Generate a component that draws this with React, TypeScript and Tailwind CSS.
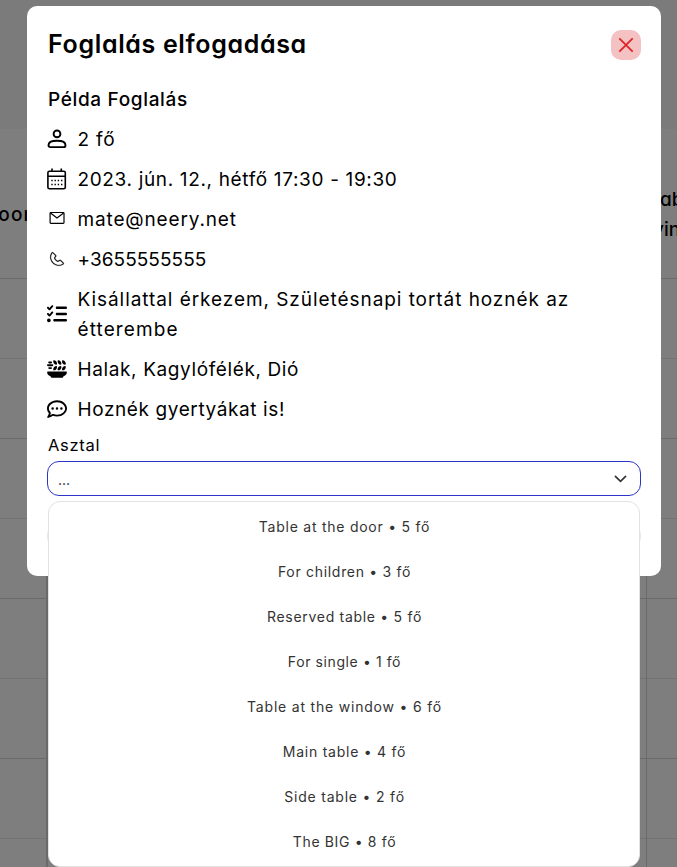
import type { ReactNode } from "react";
import { CiPhone } from "react-icons/ci";
import { FaListCheck, FaPlateWheat, FaRegCommentDots } from "react-icons/fa6";

const tables = [
  { label: "Table at the door • 5 fő", tracking: "tracking-[0.75px]" },
  { label: "For children • 3 fő", tracking: "tracking-[0.7px]" },
  { label: "Reserved table • 5 fő", tracking: "tracking-[0.7px]" },
  { label: "For single • 1 fő", tracking: "tracking-[0.6px]" },
  { label: "Table at the window • 6 fő", tracking: "tracking-[0.8px]" },
  { label: "Main table • 4 fő", tracking: "tracking-[0.75px]" },
  { label: "Side table • 2 fő", tracking: "tracking-[0.8px]" },
  { label: "The BIG • 8 fő", tracking: "tracking-[0.65px]" },
];

function PersonIcon() {
  return (
    <svg width="20" height="20" viewBox="0 0 20 20" fill="none" stroke="currentColor" strokeWidth="1.9">
      <circle cx="10" cy="4.900" r="3.400" />
      <path d="M1.500 16.200c0-3 4-4.400 8.500-4.400s8.500 1.400 8.500 4.400c0 1.200-.7 1.900-1.900 1.900H3.400c-1.200 0-1.900-.7-1.900-1.900z" />
    </svg>
  );
}

function CalendarIcon() {
  return (
    <svg width="20" height="22" viewBox="0 0 20 22" fill="none" stroke="currentColor" strokeWidth="1.600" className="-mt-px">
      <rect x="0.900" y="3.200" width="17.400" height="17.600" rx="1.500" />
      <path d="M1 8.300h17.300M5 0.600V3.500M14.300 0.600V3.500" />
      <path d="M4.300 12.500h1.400M7.500 12.500h1.400M10.700 12.500h1.400M14 12.500h1.400M4.300 16.500h1.400M7.500 16.500h1.400M10.700 16.500h1.400M14 16.500h1.400" strokeWidth="1.400" />
    </svg>
  );
}

function MailIcon() {
  return (
    <svg width="20" height="20" viewBox="0 0 20 20" fill="none" stroke="currentColor" strokeWidth="1.200">
      <rect x="3.100" y="3.500" width="13.900" height="10.800" rx="0.800" />
      <path d="M3.500 4.100l6.500 4.800 6.600-4.800" />
    </svg>
  );
}

function Detail({ icon, children }: { icon: ReactNode; children: ReactNode }) {
  return (
    <div className="mt-2.5 flex items-center">
      <span className="flex w-[30.5px] shrink-0 items-center">{icon}</span>
      <span className="translate-y-px whitespace-nowrap text-[19px] leading-[30px]">{children}</span>
    </div>
  );
}

function Backdrop() {
  return (
    <div className="flex h-full flex-col">
      <div className="h-[129px] shrink-0 bg-[#7b7b7b]" />
      <div className="flex h-[150px] shrink-0 justify-between border-b border-[#6a6a6a] font-['Inter'] text-[19px] font-medium leading-[30px] [font-feature-settings:'cv11']">
        <div className="-ml-[15px] pt-[71px] tracking-[1.2px]">Room</div>
        <div className="-mr-[22px] w-[50px] whitespace-nowrap pt-[56px]">
          <div>Table</div>
          <div className="pl-[4px]">ving</div>
        </div>
      </div>
      {[0, 1, 2, 3].map((n) => (
        <div key={n} className="h-[160px] shrink-0 border-b border-[#6a6a6a]">
          <div className="h-20 border-b border-[#737373]" />
        </div>
      ))}
    </div>
  );
}

export default function App() {
  return (
    <div className="relative h-[867px] w-[677px] overflow-hidden bg-[#7e7e7e] text-black">
      <Backdrop />
      <div className="absolute left-[46px] top-[279px] h-[588px] w-[601px] border-l-2 border-r border-[#6a6a6a]" />
      <div className="absolute left-[27px] top-[6px] h-[570px] w-[634px] rounded-[10px] bg-white px-5 pt-6 font-['Inter',sans-serif]">
        <div className="flex h-[30px] items-center justify-between">
          <h1 className="whitespace-nowrap pb-0.5 pl-px text-[25px] font-semibold leading-[30px] tracking-[0.65px] [font-feature-settings:'cv11']">
            Foglalás elfogadása
          </h1>
          <button className="flex size-[30px] items-center justify-center rounded-[10px] bg-[#f5c2c4] text-[#dc2626]">
            <svg width="16" height="16" viewBox="0 0 16 16" fill="none" stroke="currentColor" strokeWidth="1.800">
              <path d="M1.300 1.300l13.400 13.400M14.700 1.300L1.300 14.700" />
            </svg>
          </button>
        </div>
        <div className="mt-[24px] translate-y-px pl-px text-[19px] font-medium leading-[30px] tracking-[0.65px]">Példa Foglalás</div>
        <Detail icon={<PersonIcon />}><span className="tracking-[0.8px]">2 fő</span></Detail>
        <Detail icon={<CalendarIcon />}><span className="tracking-[0.65px]">2023. jún. 12., hétfő 17:30 - 19:30</span></Detail>
        <Detail icon={<MailIcon />}><span className="tracking-[0.85px]">mate@neery.net</span></Detail>
        <Detail icon={<CiPhone size={18} strokeWidth={0.500} className="ml-px" />}><span className="tracking-[0.05px]">+3655555555</span></Detail>
        <Detail icon={<FaListCheck size={20} />}>
          <span className="tracking-[0.94px]">Kisállattal érkezem, Születésnapi tortát hoznék az</span>
          <br />
          <span className="tracking-[1.1px]">étterembe</span>
        </Detail>
        <Detail icon={<FaPlateWheat size={20} />}><span className="tracking-[0.62px]">Halak, Kagylófélék, Dió</span></Detail>
        <Detail icon={<FaRegCommentDots size={20} />}><span className="tracking-[0.6px]">Hoznék gyertyákat is!</span></Detail>
        <div className="mt-2 pl-px text-[16.5px] leading-[26px] tracking-[0.7px]">Asztal</div>
        <div className="mt-[3px] flex h-[35px] items-center justify-between rounded-[12px] border border-[#2b35c8] pl-[10px] pr-[13px] text-[14px] text-[#222]">
          <span className="pt-0.5">...</span>
          <svg width="13" height="8" viewBox="0 0 14 8" fill="none" stroke="#333" strokeWidth="1.800" strokeLinecap="round">
            <path d="M1.500 1.200L7 6.600l5.500-5.400" />
          </svg>
        </div>
        <div className="mt-[22px] h-9 rounded-[18px] border border-[#e6e6e6]" />
      </div>
      <div className="absolute left-[48px] top-[501px] h-[366px] w-[592px] rounded-[12px] border border-[#e2e2e2] bg-white pt-[2px] font-['Inter',sans-serif]">
        {tables.map((table) => (
          <div key={table.label} className="flex h-[45px] items-center justify-center pl-px text-[14px] text-[#333]">
            <span className={table.tracking}>{table.label}</span>
          </div>
        ))}
      </div>
    </div>
  );
}
